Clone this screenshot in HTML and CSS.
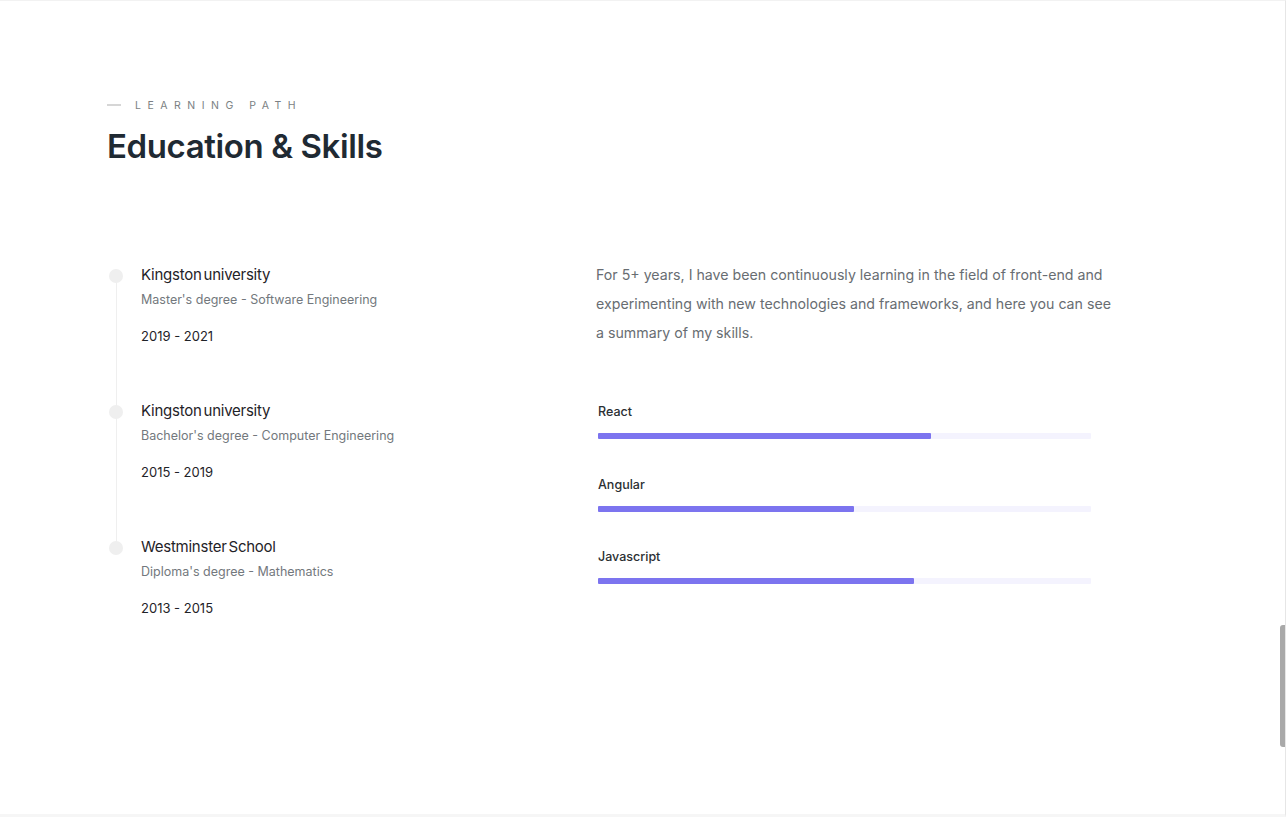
FILE: index.html
```html
<!DOCTYPE html>
<html lang="en">
<head>
<meta charset="utf-8">
<title>Education &amp; Skills</title>
<link rel="stylesheet" href="styles.css">
</head>
<body>
<div class="page">
  <section class="section">
    <div class="eyebrow"><span class="dash"></span><span class="eyebrow-text">LEARNING PATH</span></div>
    <h2 class="title">Education &amp; Skills</h2>

    <div class="columns">
      <div class="timeline">
        <div class="item">
          <span class="dot"></span>
          <div class="item-body">
            <h3 class="school">Kingston university</h3>
            <p class="degree">Master's degree - Software Engineering</p>
            <p class="years">2019 - 2021</p>
          </div>
        </div>
        <div class="item">
          <span class="dot"></span>
          <div class="item-body">
            <h3 class="school">Kingston university</h3>
            <p class="degree">Bachelor's degree - Computer Engineering</p>
            <p class="years">2015 - 2019</p>
          </div>
        </div>
        <div class="item last">
          <span class="dot"></span>
          <div class="item-body">
            <h3 class="school">Westminster School</h3>
            <p class="degree">Diploma's degree - Mathematics</p>
            <p class="years">2013 - 2015</p>
          </div>
        </div>
      </div>

      <div class="skills-col">
        <p class="intro">For 5+ years, I have been continuously learning in the field of front-end and experimenting with new technologies and frameworks, and here you can see a summary of my skills.</p>
        <div class="skills">
          <div class="skill">
            <div class="skill-name">React</div>
            <div class="track"><div class="fill" style="width: 67.5%"></div></div>
          </div>
          <div class="skill">
            <div class="skill-name">Angular</div>
            <div class="track"><div class="fill" style="width: 52%"></div></div>
          </div>
          <div class="skill">
            <div class="skill-name">Javascript</div>
            <div class="track"><div class="fill" style="width: 64%"></div></div>
          </div>
        </div>
      </div>
    </div>
  </section>
</div>
<div class="scroll-thumb"></div>
</body>
</html>
```

FILE: styles.css
```css
* { box-sizing: border-box; }

html, body {
  margin: 0;
  padding: 0;
  background: #ffffff;
  overflow: hidden;
}

body {
  font-family: Inter, "Noto Sans", Arial, sans-serif;
  color: #222;
  height: 817px;
  border-top: 1px solid #f2f2f2;
  border-right: 1px solid #e6e6e6;
  border-bottom: 3px solid #f6f6f6;
}

.page {
  height: 813px;
}

.section {
  padding: 96px 0 0 107px;
}

.eyebrow {
  display: flex;
  align-items: center;
  height: 16px;
}

.dash {
  display: block;
  width: 14px;
  height: 2px;
  background: #d6d6d6;
  margin-right: 14px;
}

.eyebrow-text {
  font-size: 10.5px;
  letter-spacing: 0.62em;
  color: #7b7f83;
  font-weight: 400;
}

.title {
  margin: 13px 0 0;
  font-family: Inter, "Noto Sans", sans-serif;
  font-size: 33px;
  font-weight: 600;
  letter-spacing: -0.4px;
  color: #1f2a33;
  line-height: 40px;
}

.columns {
  display: grid;
  grid-template-columns: 489px 540px;
  margin-top: 95px;
}

.timeline {
  display: flex;
  flex-direction: column;
}

.item {
  position: relative;
  display: flex;
  height: 136px;
}

.item::before {
  content: "";
  position: absolute;
  left: 8.5px;
  top: 14px;
  width: 1px;
  height: 136px;
  background: #efefef;
}

.item.last::before { display: none; }

.dot {
  display: block;
  flex: none;
  width: 14px;
  height: 14px;
  margin: 8px 0 0 2px;
  border-radius: 50%;
  background: #efefef;
  position: relative;
  z-index: 1;
}

.item-body {
  margin-left: 18px;
}

.school {
  margin: 0;
  font-size: 15px;
  font-weight: 400;
  letter-spacing: -0.25px;
  word-spacing: -2px;
  line-height: 28px;
  color: #1f2328;
}

.degree {
  margin: 0;
  font-size: 12.5px;
  line-height: 22px;
  color: #73787d;
}

.years {
  margin: 16px 0 0;
  font-size: 13px;
  line-height: 18px;
  color: #1f2328;
}

.skills-col {
  display: flex;
  flex-direction: column;
}

.intro {
  margin: -1px 0 0;
  font-size: 14.2px;
  line-height: 29px;
  color: #686d72;
  width: 525px;
}

.skills {
  padding-left: 2px;
  margin-top: 56px;
  width: 495px;
}

.skill {
  height: 72.5px;
}

.skill-name {
  font-size: 12.5px;
  font-weight: 500;
  color: #2b2f33;
  line-height: 18px;
}

.track {
  margin-top: 12px;
  height: 6px;
  background: #f4f3fe;
  border-radius: 1px;
}

.fill {
  height: 100%;
  background: #7c74ef;
  border-radius: 1px;
}

.scroll-thumb {
  position: fixed;
  right: 1px;
  top: 625px;
  width: 5px;
  height: 122px;
  background: #a9a9a9;
  border-radius: 3px 0 0 3px;
}
```
